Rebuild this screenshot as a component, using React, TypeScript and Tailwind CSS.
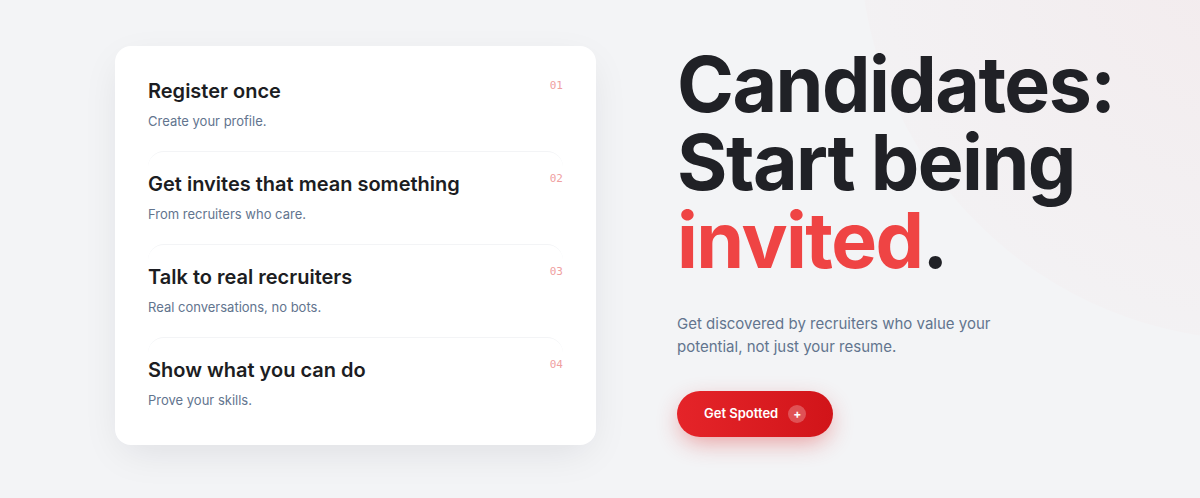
const steps = [
  { no: "01", title: "Register once", text: "Create your profile." },
  { no: "02", title: "Get invites that mean something", text: "From recruiters who care." },
  { no: "03", title: "Talk to real recruiters", text: "Real conversations, no bots." },
  { no: "04", title: "Show what you can do", text: "Prove your skills." },
];

function StepsCard() {
  return (
    <div className="mb-2 w-[481px] shrink-0 rounded-2xl bg-white px-[33px] pt-[31px] pb-[35px] shadow-[0_12px_40px_-8px_rgba(15,23,42,0.10)]">
      {steps.map((s, i) => {
        const first = i === 0;
        const last = i === steps.length - 1;
        return (
          <div
            key={s.no}
            className={`flex items-start justify-between ${
              first ? "" : "rounded-2xl border-t border-gray-100 pt-[18px]"
            } ${last ? "" : "pb-5"}`}
          >
            <div>
              <h3 className="text-xl leading-7 font-semibold text-[#1c1d22]">{s.title}</h3>
              <p className="mt-1.5 text-[13px] leading-5 text-slate-500">{s.text}</p>
            </div>
            <span className="mt-px font-['DejaVu_Sans_Mono',monospace] text-[11px] leading-4 text-[#ef9f9f]">
              {s.no}
            </span>
          </div>
        );
      })}
    </div>
  );
}

export default function App() {
  return (
    <div className="relative h-[498px] w-full overflow-hidden bg-[#f3f4f6] font-['Inter',sans-serif]">
      <div className="pointer-events-none absolute -top-[460px] -right-[460px] h-[800px] w-[800px] rounded-full bg-[radial-gradient(circle,rgba(239,68,68,0.05),rgba(239,68,68,0.015)_70%)]" />
      <div className="relative flex h-full items-center gap-[81px] px-[115px]">
        <StepsCard />
        <div className="pb-4">
          <h1 className="text-[77px] leading-[78px] font-bold tracking-[-0.02em] text-[#202126]">
            Candidates:
            <br />
            Start being
            <br />
            <span className="text-[#ef4444]">invited</span>.
          </h1>
          <p className="mt-[33px] max-w-[340px] text-[15px] leading-[23px] text-slate-500">
            Get discovered by recruiters who value your potential, not just your resume.
          </p>
          <button className="mt-[33px] flex h-[46px] items-center gap-2.5 rounded-full bg-gradient-to-r from-[#e52429] to-[#d11419] px-[27px] text-[13px] font-semibold text-white shadow-[0_8px_24px_-4px_rgba(220,38,38,0.45)]">
            Get Spotted
            <span className="flex h-[18px] w-[18px] items-center justify-center rounded-full bg-white/25 text-[12px] leading-none font-bold">
              +
            </span>
          </button>
        </div>
      </div>
    </div>
  );
}
